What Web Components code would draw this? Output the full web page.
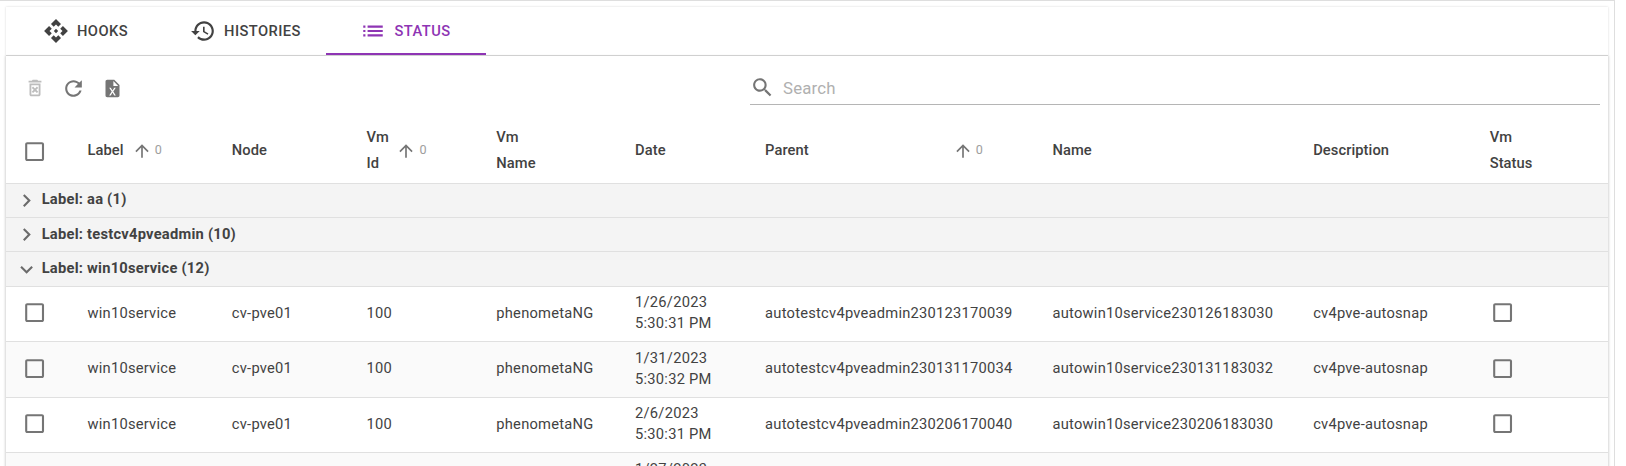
<!DOCTYPE html>
<html lang="en">
<head>
<meta charset="utf-8">
<title>Snapshots status</title>
<style>
html, body { margin: 0; height: 100%; overflow: hidden; background: #fff; }
body { font-family: Roboto, "Liberation Sans", sans-serif; color: #424242; }
</style>
</head>
<body>
<snap-page></snap-page>
<script>
const ICONS = {
  api: '<path d="M14 12l-2 2-2-2 2-2 2 2zm-2-6l2.12 2.12 2.5-2.5L12 1 7.38 5.62l2.5 2.5L12 6zm-6 6l2.12-2.12-2.5-2.5L1 12l4.62 4.62 2.5-2.5L6 12zm12 0l-2.12 2.12 2.5 2.5L23 12l-4.62-4.62-2.5 2.5L18 12zm-6 6l-2.12-2.12-2.5 2.5L12 23l4.62-4.62-2.5-2.5L12 18z"/>',
  history: '<path d="M13 3c-4.97 0-9 4.03-9 9H1l3.89 3.89.07.14L9 12H6c0-3.87 3.13-7 7-7s7 3.13 7 7-3.13 7-7 7c-1.93 0-3.68-.79-4.94-2.06l-1.42 1.42C8.27 19.99 10.51 21 13 21c4.97 0 9-4.03 9-9s-4.03-9-9-9zm-1 5v5l4.28 2.54.72-1.21-3.5-2.08V8H12z"/>',
  list: '<path d="M3 13h2v-2H3v2zm0 4h2v-2H3v2zm0-8h2V7H3v2zm4 4h14v-2H7v2zm0 4h14v-2H7v2zM7 7v2h14V7H7z"/>',
  remove: '<path d="M14.12 10.47L12 12.59l-2.13-2.12-1.41 1.41L10.59 14l-2.12 2.12 1.41 1.41L12 15.41l2.12 2.12 1.41-1.41L13.41 14l2.12-2.12zM15.5 4l-1-1h-5l-1 1H5v2h14V4zM6 19c0 1.1.9 2 2 2h8c1.1 0 2-.9 2-2V7H6v12zM8 9h8v10H8V9z"/>',
  refresh: '<path d="M17.65 6.35C16.2 4.9 14.21 4 12 4c-4.42 0-7.99 3.58-7.99 8s3.57 8 7.99 8c3.73 0 6.84-2.55 7.73-6h-2.08c-.82 2.33-3.04 4-5.65 4-3.31 0-6-2.69-6-6s2.69-6 6-6c1.66 0 3.14.69 4.22 1.78L13 11h7V4l-2.35 2.35z"/>',
  excel: '<path d="M14 2H6c-1.11 0-2 .89-2 2v16c0 1.11.89 2 2 2h12c1.11 0 2-.89 2-2V8l-6-6m1.8 18H14l-2-3.4-2 3.4H8.2l2.9-4.5L8.2 11H10l2 3.4 2-3.4h1.8l-2.9 4.5 2.9 4.5M13 9V3.5L18.5 9H13z"/>',
  search: '<path d="M15.5 14h-.79l-.28-.27C15.41 12.59 16 11.11 16 9.5 16 5.91 13.09 3 9.5 3S3 5.91 3 9.5 5.91 16 9.5 16c1.61 0 3.09-.59 4.23-1.57l.27.28v.79l5 4.99L20.49 19l-4.99-5zm-6 0C7.01 14 5 11.99 5 9.5S7.01 5 9.5 5 14 7.01 14 9.5 11.99 14 9.5 14z"/>',
  up: '<path d="M4 12l1.41 1.41L11 7.83V20h2V7.83l5.58 5.59L20 12l-8-8-8 8z"/>',
  right: '<path d="M10 6L8.59 7.41 13.17 12l-4.58 4.59L10 18l6-6z"/>',
  down: '<path d="M16.59 8.59L12 13.17 7.41 8.59 6 10l6 6 6-6z"/>',
  box: '<path d="M19 5v14H5V5h14m0-2H5c-1.1 0-2 .9-2 2v14c0 1.1.9 2 2 2h14c1.1 0 2-.9 2-2V5c0-1.1-.9-2-2-2z"/>'
};

const define = (name, render) => customElements.define(name, class extends HTMLElement {
  connectedCallback() {
    if (this.shadowRoot) return;
    this.attachShadow({ mode: 'open' }).innerHTML = render(this);
  }
});

define('snap-icon', el => `
<style>
:host { display: block; flex: none; width: var(--size, 24px); height: var(--size, 24px); }
svg { display: block; width: 100%; height: 100%; fill: currentColor; }
</style>
<svg viewBox="0 0 24 24" aria-hidden="true">${ICONS[el.getAttribute('name')]}</svg>`);

define('snap-tab', el => `
<style>
:host { display: flex; box-sizing: border-box; width: 160px; height: 48px; align-items: center; justify-content: center;
  font-size: 14.7px; font-weight: 500; letter-spacing: .44px; line-height: 26px; padding-bottom: 1px; --size: 26px; }
:host([active]) { color: #8e35b4; border-bottom: 2px solid #8e35b4; padding: 1px 0 0; }
snap-icon { margin-right: 8px; margin-left: -1px; }
</style>
<snap-icon name="${el.getAttribute('icon')}"></snap-icon><slot></slot>`);

define('snap-toolbar', () => `
<style>
:host { display: flex; height: 64px; padding: 0 8px 0 16.7px; align-items: center; box-sizing: border-box; }
.actions { display: flex; align-items: center; gap: 13.6px; color: #757575; --size: 25px; flex: 1; }
.off { color: #bdbdbd; --size: 22px; margin: 0 1.5px; }
.file { --size: 21px; margin: 0 2px; }
.search { display: flex; box-sizing: border-box; width: 850px; height: 34px; border-bottom: 1px solid #b5b5b5;
  align-items: center; gap: 8px; color: #757575; --size: 25px; }
.search span { font-size: 16.8px; color: #b0b0b0; letter-spacing: .2px; }
</style>
<div class="actions"><snap-icon class="off" name="remove"></snap-icon><snap-icon name="refresh"></snap-icon><snap-icon class="file" name="excel"></snap-icon></div>
<div class="search"><snap-icon name="search"></snap-icon><span>Search</span></div>`);

define('snap-row', () => `
<style>
:host { display: grid; grid-template-columns: 81.5px 144.3px 134.7px 129.8px 138.8px 130px 287.4px 260.7px 176.5px 1fr;
  align-items: center; box-sizing: border-box; height: 55.5px; padding-bottom: 1.5px; border-bottom: 1px solid #e0e0e0; }
:host([striped]) { background: #fafafa; }
:host([head]) { height: 63.6px; padding-bottom: 0; }
</style><slot></slot>`);

define('snap-cell', () => `
<style>
:host { display: block; font-size: 14.7px; line-height: 21px; letter-spacing: .24px; }
slot { display: block; white-space: pre-line; }
</style><slot></slot>`);

define('snap-check', () => `
<style>
:host { display: block; color: #757575; padding-left: var(--inset, 16.2px); --size: 25.2px; }
</style><snap-icon name="box"></snap-icon>`);

define('snap-head-cell', el => `
<style>
:host { display: flex; align-items: center; font-size: 14.7px; line-height: 26px; font-weight: 500; letter-spacing: .08px; }
slot { display: block; white-space: pre-line; padding-bottom: var(--lift, 3px); }
.sort { display: flex; align-items: center; margin-left: var(--push, 8px); color: #757575; --size: 20px; }
.sort b { font: 400 12.6px/20px Roboto, sans-serif; color: #9e9e9e; margin: 0 0 3px 3px; }
</style><slot></slot>${el.hasAttribute('sorted') ? '<span class="sort"><snap-icon name="up"></snap-icon><b>0</b></span>' : ''}`);

define('snap-group', el => `
<style>
:host { display: flex; box-sizing: border-box; height: 34.33px; align-items: center; background: #f4f4f4; border-bottom: 1px solid #e0e0e0;
  padding-left: 8.3px; gap: 2.2px; font-size: 14.7px; font-weight: 700; letter-spacing: .24px; line-height: 21px; --size: 25.2px; }
snap-icon { color: #6b6b6b; margin-top: 1px; }
span { margin-bottom: 1px; }
</style><snap-icon name="${el.hasAttribute('open') ? 'down' : 'right'}"></snap-icon><span><slot></slot></span>`);

const rows = [
  ['1/26/2023\n5:30:31 PM', 'autotestcv4pveadmin230123170039', 'autowin10service230126183030'],
  ['1/31/2023\n5:30:32 PM', 'autotestcv4pveadmin230131170034', 'autowin10service230131183032'],
  ['2/6/2023\n5:30:31 PM', 'autotestcv4pveadmin230206170040', 'autowin10service230206183030']
];

define('snap-table', () => `
<style>
:host { display: block; }
.state { --inset: 0px; }
.parent { --push: 144px; }
.two { --lift: 2px; --push: 7.5px; }
.next { grid-column: 6; }
</style>
<snap-row head><snap-check></snap-check><snap-head-cell sorted>Label</snap-head-cell><snap-head-cell>Node</snap-head-cell><snap-head-cell class="two" sorted>Vm\nId</snap-head-cell><snap-head-cell class="two">Vm\nName</snap-head-cell><snap-head-cell>Date</snap-head-cell><snap-head-cell class="parent" sorted>Parent</snap-head-cell><snap-head-cell>Name</snap-head-cell><snap-head-cell>Description</snap-head-cell><snap-head-cell class="two">Vm\nStatus</snap-head-cell></snap-row>
<snap-group>Label: aa (1)</snap-group>
<snap-group>Label: testcv4pveadmin (10)</snap-group>
<snap-group open>Label: win10service (12)</snap-group>
${rows.map(([date, parent, name], i) => `<snap-row ${i % 2 ? 'striped' : ''}><snap-check></snap-check>${
  ['win10service', 'cv-pve01', '100', 'phenometaNG', date, parent, name, 'cv4pve-autosnap'].map(t => `<snap-cell>${t}</snap-cell>`).join('')
}<snap-check class="state"></snap-check></snap-row>`).join('')}
<snap-row striped><snap-cell class="next">1/27/2023\n\u00a0</snap-cell></snap-row>`);

define('snap-page', () => `
<style>
:host { display: block; box-sizing: border-box; width: 1615px; height: 466px; overflow: hidden;
  border-top: 1px solid #dedede; border-right: 1px solid #dedede; padding: 6px 6px 0; }
.tabs { display: flex; height: 48px; border-bottom: 1px solid #dcdcdc; box-shadow: 0 0 2px rgba(0,0,0,.16); }
.panel { height: 500px; box-shadow: 0 1px 2px 1px rgba(0,0,0,.16); background: #fff; }
</style>
<div class="tabs"><snap-tab icon="api">HOOKS</snap-tab><snap-tab icon="history">HISTORIES</snap-tab><snap-tab icon="list" active>STATUS</snap-tab></div>
<div class="panel"><snap-toolbar></snap-toolbar><snap-table></snap-table></div>`);
</script>
</body>
</html>
